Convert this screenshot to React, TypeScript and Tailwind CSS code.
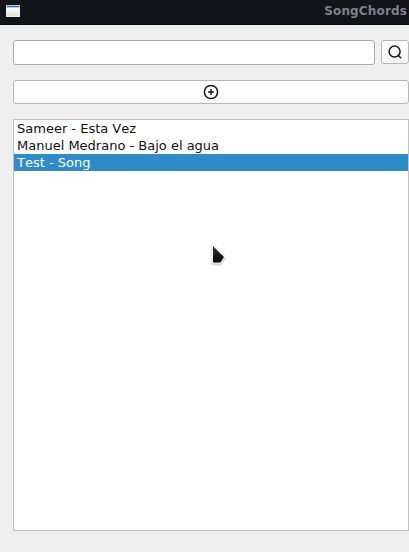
import { useState } from 'react';

const songs = ['Sameer - Esta Vez', 'Manuel Medrano - Bajo el agua', 'Test - Song'];

function WindowIcon() {
  return (
    <svg width="14" height="12" viewBox="0 0 14 12" aria-hidden="true">
      <defs>
        <linearGradient id="pane" x1="0" y1="0" x2="0" y2="1">
          <stop offset="0" stopColor="#ffffff" />
          <stop offset="1" stopColor="#dfdfdb" />
        </linearGradient>
      </defs>
      <rect width="14" height="12" fill="#eeeeeb" />
      <rect width="14" height="3" fill="#b9cce4" />
      <rect x="1" y="1" width="12" height="1" fill="#396cae" />
      <rect x="1" y="3" width="12" height="8" fill="url(#pane)" />
    </svg>
  );
}

function SearchIcon() {
  return (
    <svg width="16" height="16" viewBox="0 0 16 16" fill="none" stroke="#17181b" strokeWidth="1.5" aria-hidden="true">
      <circle cx="7.6" cy="7.6" r="5.5" />
      <path d="M10.6 10.8 14.2 14.2" />
    </svg>
  );
}

function AddIcon() {
  return (
    <svg width="16" height="16" viewBox="0 0 16 16" fill="none" stroke="#17181b" strokeWidth="1.5" aria-hidden="true">
      <circle cx="8" cy="8" r="6.6" />
      <path d="M8 5v6M5 8h6" />
    </svg>
  );
}

function Pointer() {
  return (
    <svg className="pointer-events-none absolute left-[209px] top-[242px] drop-shadow-[0_1px_1px_rgba(0,0,0,0.35)]" width="20" height="25" viewBox="0 0 20 25" aria-hidden="true">
      <defs>
        <linearGradient id="arrow" x1="0" y1="0" x2="0" y2="1">
          <stop offset="0" stopColor="#383838" />
          <stop offset="1" stopColor="#000000" />
        </linearGradient>
      </defs>
      <path d="M4 4 15 15 11.5 20.5H4Z" fill="url(#arrow)" stroke="#ffffff" strokeWidth="2" strokeLinejoin="round" paintOrder="stroke" />
    </svg>
  );
}

export default function App() {
  const [query, setQuery] = useState('');
  const [selected, setSelected] = useState(2);

  return (
    <div className="relative flex h-[552px] w-[409px] flex-col overflow-hidden bg-[#efefef] font-['DejaVu_Sans',sans-serif] text-[13px] text-[#101113] [font-kerning:none]">
      <header className="flex h-[25px] shrink-0 justify-between border-b border-[#0b0c11] bg-[#13141a] pl-1.5 pr-[2px] pt-[5px]">
        <WindowIcon />
        <h1 className="-mt-[2px] text-[12px] font-bold leading-4 tracking-[0.15px] text-[#7b838b]">SongChords</h1>
      </header>
      <main className="flex min-h-0 flex-1 flex-col pb-[21px] pl-[13px] pt-[15px]">
        <div className="flex items-start gap-1.5">
          <input
            aria-label="Search songs"
            value={query}
            onChange={(e) => setQuery(e.target.value)}
            className="h-[25px] w-[362px] rounded-[3px] border border-[#ababab] bg-white px-1 outline-none"
          />
          <button aria-label="Search" className="flex h-6 w-7 items-center justify-center rounded-[3px] border border-[#b6b6b6] bg-linear-to-b from-white to-[#f3f3f3]">
            <SearchIcon />
          </button>
        </div>
        <button aria-label="Add song" className="mt-[15px] flex h-6 w-full shrink-0 items-center justify-center rounded-[3px] border border-[#b6b6b6] bg-linear-to-b from-white to-[#f8f8f8]">
          <AddIcon />
        </button>
        <ul className="mt-[15px] min-h-0 flex-1 border border-[#c1c1c1] bg-white">
          {songs.map((song, i) => (
            <li
              key={song}
              onClick={() => setSelected(i)}
              className={`h-[17px] pl-[3px] leading-[17px] ${selected === i ? 'bg-[#308cc6] text-white' : ''}`}
            >
              {song}
            </li>
          ))}
        </ul>
      </main>
      <Pointer />
    </div>
  );
}
